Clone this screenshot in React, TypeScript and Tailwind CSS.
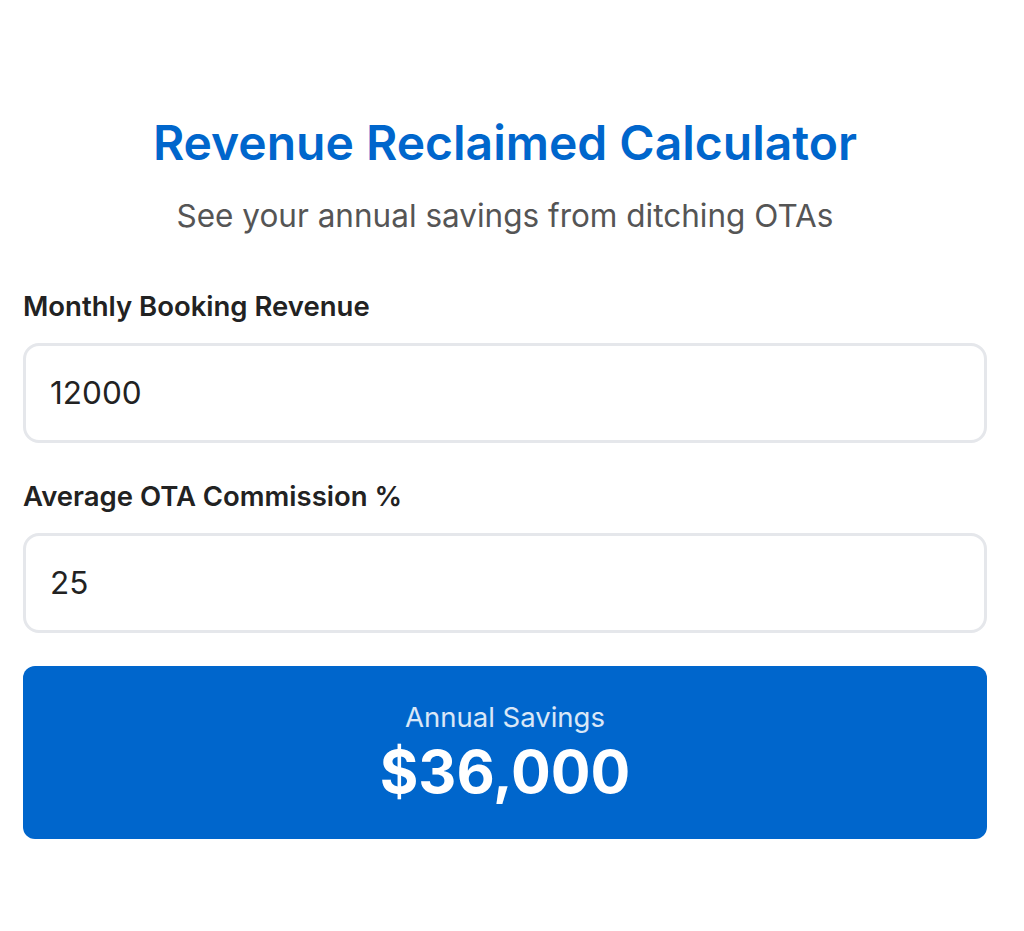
export default function App() {
  const revenue = 12000;
  const commission = 25;
  const savings = revenue * (commission / 100) * 12;

  return (
    <div className="min-h-[931px] bg-white" style={{ fontFamily: 'Inter, "Noto Sans", sans-serif' }}>
      <div className="ml-[23px] w-[964px] pt-[114px]">
        <h1 className="text-center text-[48px] leading-[58px] font-semibold text-[#0066cc]">
          Revenue Reclaimed Calculator
        </h1>
        <p className="mt-[22px] text-center text-[31.5px] leading-[44px] text-[#555555]">
          See your annual savings from ditching OTAs
        </p>

        <div className="mt-[50px]">
          <label className="block text-[27.5px] leading-[36px] font-semibold text-[#222222]">
            Monthly Booking Revenue
          </label>
          <div className="mt-[19px] h-[100px] rounded-[16px] border-[3px] border-[#e5e7eb] px-[24px] flex items-center text-[31.5px] text-[#222222]">
            {revenue}
          </div>
        </div>

        <div className="mt-[35px]">
          <label className="block text-[27.5px] leading-[36px] font-semibold text-[#222222]">
            Average OTA Commission %
          </label>
          <div className="mt-[19px] h-[100px] rounded-[16px] border-[3px] border-[#e5e7eb] px-[24px] flex items-center text-[31.5px] text-[#222222]">
            {commission}
          </div>
        </div>

        <div className="mt-[33px] h-[173px] rounded-[12px] bg-[#0066cc] flex flex-col items-center justify-center gap-[7px] text-white">
          <div className="text-[27.5px] leading-[32px] text-white/85">Annual Savings</div>
          <div className="text-[59px] leading-[64px] font-bold">${savings.toLocaleString('en-US')}</div>
        </div>
      </div>
    </div>
  );
}
